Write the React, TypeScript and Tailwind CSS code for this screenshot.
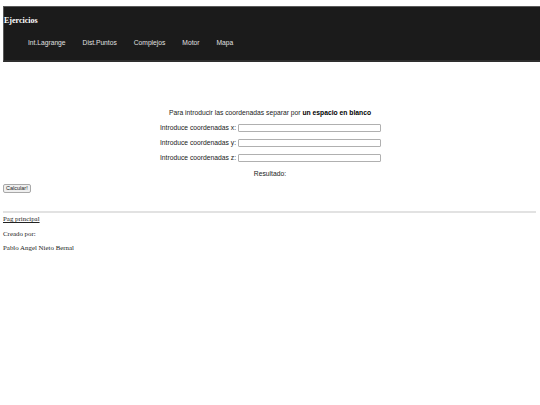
const links = ["Int.Lagrange", "Dist.Puntos", "Complejos", "Motor", "Mapa"];

function Field({ axis }: { axis: string }) {
  return (
    <div className="flex items-center justify-center gap-[2px] h-[8px] pl-[1px]">
      <span>Introduce coordenadas {axis}:</span>
      <input
        type="text"
        className="w-[143px] h-[8px] border border-[#b0b0b0] rounded-[1px] bg-white"
      />
    </div>
  );
}

export default function App() {
  return (
    <div className="w-[540px] h-[405px] bg-white text-black">
      <header className="mt-[6px] ml-[3px] h-[56px] bg-[#1b1b1b] border-t border-l border-[#5a5a5a] border-b-2 border-b-[#2e2e2e]">
        <h1 className="pt-[9px] text-[8px] leading-[9px] font-bold text-white font-['Liberation_Serif',serif]">
          Ejercicios
        </h1>
        <nav className="mt-[14px] flex gap-[17px] pl-[24px] text-[6.7px] leading-[8px] text-[#e0e0e0] font-['Liberation_Sans',sans-serif]">
          {links.map((l) => (
            <a key={l} href="#">
              {l}
            </a>
          ))}
        </nav>
      </header>

      <main className="font-['Liberation_Sans',sans-serif] text-[6.75px] leading-[8px] text-[#222]">
        <p className="mt-[47px] text-center">
          Para introducir las coordenadas separar por <b className="text-black">un espacio en blanco</b>
        </p>
        <div className="mt-[7px] flex flex-col gap-[7px]">
          <Field axis="x" />
          <Field axis="y" />
          <Field axis="z" />
        </div>
        <p className="mt-[8px] text-center">Resultado:</p>
        <button className="mt-[6px] ml-[3px] h-[9px] px-[2px] text-[5.5px] leading-[7px] border border-[#a8a8a8] rounded-[2px] bg-[#efefef]">
          Calcular!
        </button>
      </main>

      <footer className="font-['Liberation_Serif',serif] text-[6.9px] leading-[8px] text-[#222]">
        <hr className="mt-[18px] ml-[3px] mr-[4px] border-t-2 border-[#e2e2e2]" />
        <a href="#" className="block mt-[2px] ml-[3px] underline">
          Pag principal
        </a>
        <p className="mt-[7px] ml-[3px]">Creado por:</p>
        <p className="mt-[6px] ml-[3px]">Pablo Angel Nieto Bernal</p>
      </footer>
    </div>
  );
}
